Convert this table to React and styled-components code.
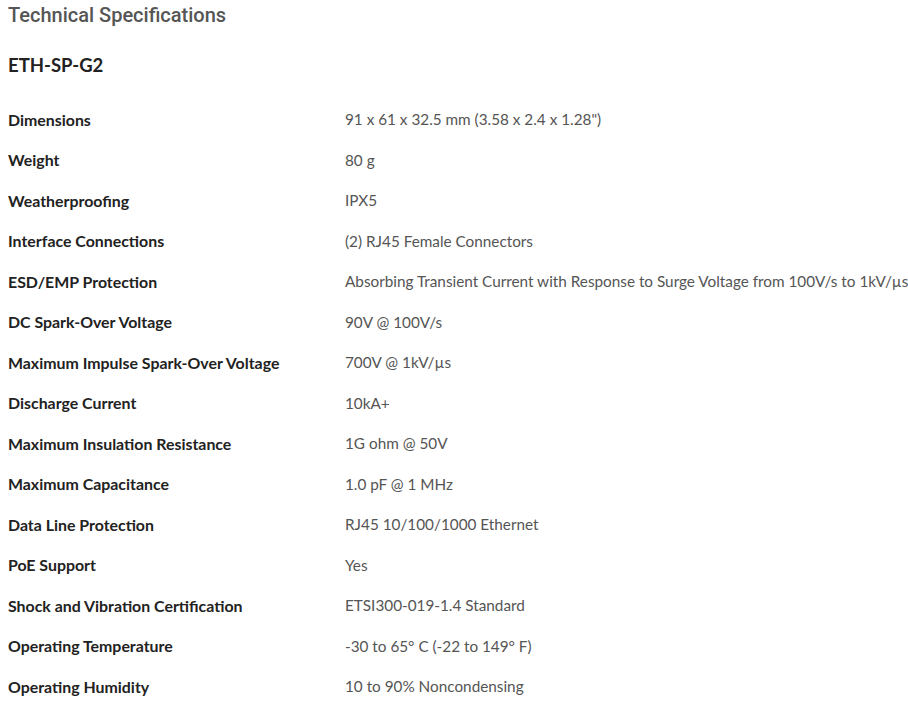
import styled, { createGlobalStyle } from 'styled-components';

const specs = [
    ['Dimensions', '91 x 61 x 32.5 mm (3.58 x 2.4 x 1.28")'],
    ['Weight', '80 g'],
    ['Weatherproofing', 'IPX5'],
    ['Interface Connections', '(2) RJ45 Female Connectors'],
    ['ESD/EMP Protection', 'Absorbing Transient Current with Response to Surge Voltage from 100V/s to 1kV/µs'],
    ['DC Spark-Over Voltage', '90V @ 100V/s'],
    ['Maximum Impulse Spark-Over Voltage', '700V @ 1kV/µs'],
    ['Discharge Current', '10kA+'],
    ['Maximum Insulation Resistance', '1G ohm @ 50V'],
    ['Maximum Capacitance', '1.0 pF @ 1 MHz'],
    ['Data Line Protection', 'RJ45 10/100/1000 Ethernet'],
    ['PoE Support', 'Yes'],
    ['Shock and Vibration Certification', 'ETSI300-019-1.4 Standard'],
    ['Operating Temperature', '-30 to 65° C (-22 to 149° F)'],
    ['Operating Humidity', '10 to 90% Noncondensing'],
];

function App() {
    return (
        <>
            <GlobalStyle />
            <Page>
                <Title>Technical Specifications</Title>
                <Model>ETH-SP-G2</Model>
                <SpecTable>
                    {specs.map(([label, value]) => (
                        <Row key={label}>
                            <Label>{label}</Label>
                            <Value>{value}</Value>
                        </Row>
                    ))}
                </SpecTable>
            </Page>
        </>
    )
}

const GlobalStyle = createGlobalStyle`
    body {
        margin:0;
        background:#fff;
        font-family:Lato, "Open Sans", sans-serif;
    }
`;
const Page = styled.div`
    padding:0 8px;
`;
const Title = styled.h1`
    margin:0;
    padding-top:3px;
    font-family:Roboto, "Liberation Sans", sans-serif;
    font-size:20px;
    font-weight:500;
    color:#555;
    line-height:24px;
`;
const Model = styled.h2`
    margin:25px 0 0;
    font-size:18.5px;
    font-weight:700;
    color:#222;
    line-height:26px;
`;
const SpecTable = styled.div`
    margin-top:21px;
    display:flex;
    flex-direction:column;
`;
const Row = styled.div`
    display:grid;
    grid-template-columns:337px 1fr;
    height:40.5px;
    align-items:center;
`;
const Label = styled.div`
    font-size:15.9px;
    font-weight:700;
    color:#222;
    white-space:nowrap;
`;
const Value = styled.div`
    font-size:15.3px;
    font-weight:400;
    color:#555;
    white-space:nowrap;
`;

export default App
